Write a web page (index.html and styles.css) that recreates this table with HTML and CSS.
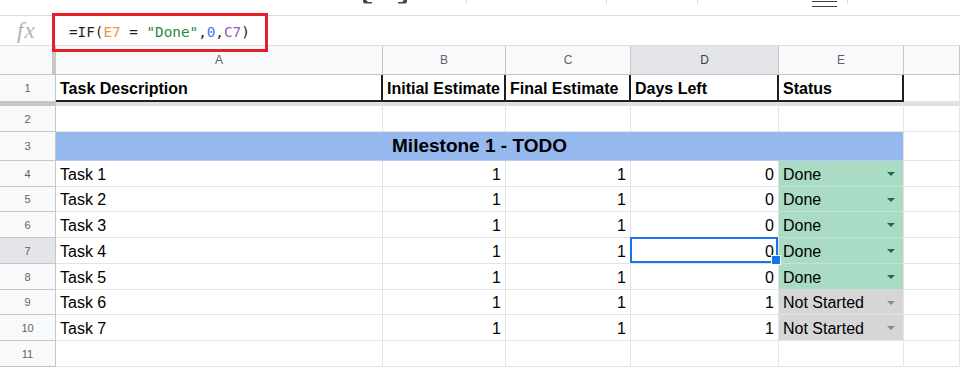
FILE: index.html
```html
<!DOCTYPE html>
<html>
<head>
<meta charset="utf-8">
<title>Sheet</title>
<link rel="stylesheet" href="styles.css">
</head>
<body>
<div class="app">
  <div class="toolbar">
    <span class="tb-tip"><svg width="10" height="4" viewBox="0 0 10 4"><path d="M1 0 H4 L6 2 H10 V3.5 H3 Q1 3.5 1 1.5 Z" fill="#444746"/></svg></span>
    <span class="tb-tip tb-redo"><svg width="10" height="4" viewBox="0 0 10 4"><path d="M9 0 H6 L4 2 H0 V3.5 H7 Q9 3.5 9 1.5 Z" fill="#444746"/></svg></span>
    <span class="tb-sep s1"></span>
    <span class="tb-sep s2"></span>
    <span class="tb-sep s3"></span>
    <span class="tb-lines"></span>
    <span class="tb-sep s4"></span>
  </div>

  <div class="formula-bar">
    <div class="fx">fx</div>
    <div class="formula">=IF(<span class="ref-e">E7</span> = <span class="str">"Done"</span>,<span class="num0">0</span>,<span class="ref-c">C7</span>)</div>
  </div>
  <div class="annot"></div>

  <div class="sheet">
    <!-- column headers -->
    <div class="corner"></div>
    <div class="h">A</div>
    <div class="h">B</div>
    <div class="h">C</div>
    <div class="h hsel">D</div>
    <div class="h">E</div>
    <div class="h"></div>

    <!-- row 1 -->
    <div class="rh">1</div>
    <div class="c b1">Task Description</div>
    <div class="c b1">Initial Estimate</div>
    <div class="c b1">Final Estimate</div>
    <div class="c b1">Days Left</div>
    <div class="c b1">Status</div>
    <div class="c"></div>

    <!-- frozen divider -->
    <div class="band-rh"></div>
    <div class="band"></div>

    <!-- row 2 -->
    <div class="rh">2</div>
    <div class="c"></div>
    <div class="c"></div>
    <div class="c"></div>
    <div class="c"></div>
    <div class="c"></div>
    <div class="c"></div>

    <!-- row 3 -->
    <div class="rh">3</div>
    <div class="c m">Milestone 1 - TODO</div>
    <div class="c"></div>

    <!-- row 4 -->
    <div class="rh">4</div>
    <div class="c">Task 1</div>
    <div class="c n">1</div>
    <div class="c n">1</div>
    <div class="c n">0</div>
    <div class="c st done">Done<span class="arrow"></span></div>
    <div class="c"></div>

    <!-- row 5 -->
    <div class="rh">5</div>
    <div class="c">Task 2</div>
    <div class="c n">1</div>
    <div class="c n">1</div>
    <div class="c n">0</div>
    <div class="c st done">Done<span class="arrow"></span></div>
    <div class="c"></div>

    <!-- row 6 -->
    <div class="rh">6</div>
    <div class="c">Task 3</div>
    <div class="c n">1</div>
    <div class="c n">1</div>
    <div class="c n">0</div>
    <div class="c st done">Done<span class="arrow"></span></div>
    <div class="c"></div>

    <!-- row 7 -->
    <div class="rh rsel">7</div>
    <div class="c">Task 4</div>
    <div class="c n">1</div>
    <div class="c n">1</div>
    <div class="c n sel">0</div>
    <div class="c st done">Done<span class="arrow"></span></div>
    <div class="c"></div>

    <!-- row 8 -->
    <div class="rh">8</div>
    <div class="c">Task 5</div>
    <div class="c n">1</div>
    <div class="c n">1</div>
    <div class="c n">0</div>
    <div class="c st done">Done<span class="arrow"></span></div>
    <div class="c"></div>

    <!-- row 9 -->
    <div class="rh">9</div>
    <div class="c">Task 6</div>
    <div class="c n">1</div>
    <div class="c n">1</div>
    <div class="c n">1</div>
    <div class="c st ns">Not Started<span class="arrow"></span></div>
    <div class="c"></div>

    <!-- row 10 -->
    <div class="rh">10</div>
    <div class="c">Task 7</div>
    <div class="c n">1</div>
    <div class="c n">1</div>
    <div class="c n">1</div>
    <div class="c st ns">Not Started<span class="arrow"></span></div>
    <div class="c"></div>

    <!-- row 11 -->
    <div class="rh">11</div>
    <div class="c"></div>
    <div class="c"></div>
    <div class="c"></div>
    <div class="c"></div>
    <div class="c"></div>
    <div class="c"></div>
  </div>
</div>
</body>
</html>
```

FILE: styles.css
```css
* {
  box-sizing: border-box;
}

html,
body {
  margin: 0;
  padding: 0;
}

body {
  width: 960px;
  height: 368px;
  overflow: hidden;
  background: #ffffff;
  font-family: "Liberation Sans", Arial, sans-serif;
  color: #000000;
}

.app {
  position: relative;
}

/* ---------- toolbar remnants ---------- */
.toolbar {
  display: flex;
  align-items: flex-start;
  height: 16px;
  padding-left: 362px;
  border-bottom: 1px solid #dadce0;
  overflow: hidden;
}

.tb-tip {
  display: block;
  width: 10px;
  height: 4px;
}

.tb-tip svg {
  display: block;
}

.tb-redo {
  margin-left: 26px;
}

.tb-sep {
  display: block;
  width: 1px;
  height: 4px;
  background: #dadce0;
}

.s1 { margin-left: 58px; }
.s2 { margin-left: 139px; }
.s3 { margin-left: 90px; }
.s4 { margin-left: 10px; }

.tb-lines {
  display: block;
  margin-left: 114px;
  margin-top: 1px;
  width: 25px;
  height: 6px;
  border-top: 1.5px solid #3c4043;
  border-bottom: 1.5px solid #3c4043;
}

/* ---------- formula bar ---------- */
.formula-bar {
  display: flex;
  align-items: center;
  height: 30px;
  border-bottom: 1px solid #dadce0;
}

.fx {
  width: 69px;
  padding-left: 17px;
  font-family: "Liberation Serif", "Times New Roman", serif;
  font-style: italic;
  font-size: 23px;
  letter-spacing: 1px;
  color: #b0b3b7;
  line-height: 28px;
}

.formula {
  padding-top: 2px;
  font-family: "DejaVu Sans Mono", "Liberation Mono", monospace;
  font-size: 14.3px;
  color: #1f1f1f;
  line-height: 18px;
  white-space: pre;
}

.ref-e { color: #f0963c; }
.str { color: #2b8a3e; }
.num0 { color: #3c78d8; }
.ref-c { color: #8e5fb8; }

.annot {
  position: absolute;
  left: 52px;
  top: 13px;
  width: 216px;
  height: 39px;
  border: 3px solid #e3202a;
}

/* ---------- grid ---------- */
.sheet {
  display: grid;
  grid-template-columns: 56px 327px 123px 125px 148px 125px 1fr;
  grid-template-rows: 29px 27px 4px 26px 29px 26px 25px 26px 26px 26px 25px 26px 26px;
}

.corner {
  background: #f8f9fa;
  border-right: 4px solid #c4c7c5;
  border-bottom: 1px solid #c4c7c5;
}

.h {
  display: flex;
  align-items: center;
  justify-content: center;
  background: #f8f9fa;
  border-right: 1px solid #c4c7c5;
  border-bottom: 1px solid #c4c7c5;
  font-size: 12px;
  color: #5f6368;
}

.hsel,
.rsel {
  background: #e3e5e8;
  color: #3c4043;
}

.rh {
  display: flex;
  align-items: center;
  justify-content: center;
  background: #f8f9fa;
  border-right: 1px solid #c4c7c5;
  border-bottom: 1px solid #c4c7c5;
  font-size: 11px;
  color: #5f6368;
}

.rh.rsel {
  background: #e3e5e8;
}

.c {
  display: flex;
  align-items: flex-end;
  padding: 0 4px 2px 4px;
  border-right: 1px solid #e2e3e3;
  border-bottom: 1px solid #e2e3e3;
  font-size: 16px;
  line-height: 19px;
  white-space: nowrap;
  overflow: hidden;
}

.n {
  justify-content: flex-end;
}

.b1 {
  font-weight: bold;
  border-right: 2px solid #1f1f1f;
  border-bottom: 2px solid #1f1f1f;
  padding-bottom: 2px;
}

.band-rh {
  background: #c4c7c5;
}

.band {
  grid-column: 2 / -1;
  background: #dce1e8;
}

.m {
  grid-column: 2 / 7;
  justify-content: center;
  background: #95b8ee;
  border-bottom-color: #b9cdee;
  font-weight: bold;
  font-size: 19px;
  line-height: 22px;
  padding-bottom: 3px;
}

.st {
  justify-content: space-between;
}

.done {
  background: #aadcc5;
  border-bottom-color: #c0e4d3;
}

.ns {
  background: #d6d6d6;
  border-bottom-color: #e2e2e2;
}

.arrow {
  align-self: center;
  margin-right: 4px;
  margin-bottom: -3px;
  width: 0;
  height: 0;
  border-left: 4.5px solid transparent;
  border-right: 4.5px solid transparent;
  border-top: 4px solid #1d6b47;
}

.ns .arrow {
  border-top-color: #8a8a8a;
}

.sel {
  position: relative;
  z-index: 2;
  overflow: visible;
}

.sel::after {
  content: "";
  position: absolute;
  top: -1px;
  left: -1px;
  right: 0;
  bottom: 0;
  border: 2px solid #1a73e8;
}

.sel::before {
  content: "";
  position: absolute;
  right: -3px;
  bottom: -2px;
  width: 8px;
  height: 8px;
  background: #1a73e8;
  border: 1px solid #ffffff;
  z-index: 3;
}
```
